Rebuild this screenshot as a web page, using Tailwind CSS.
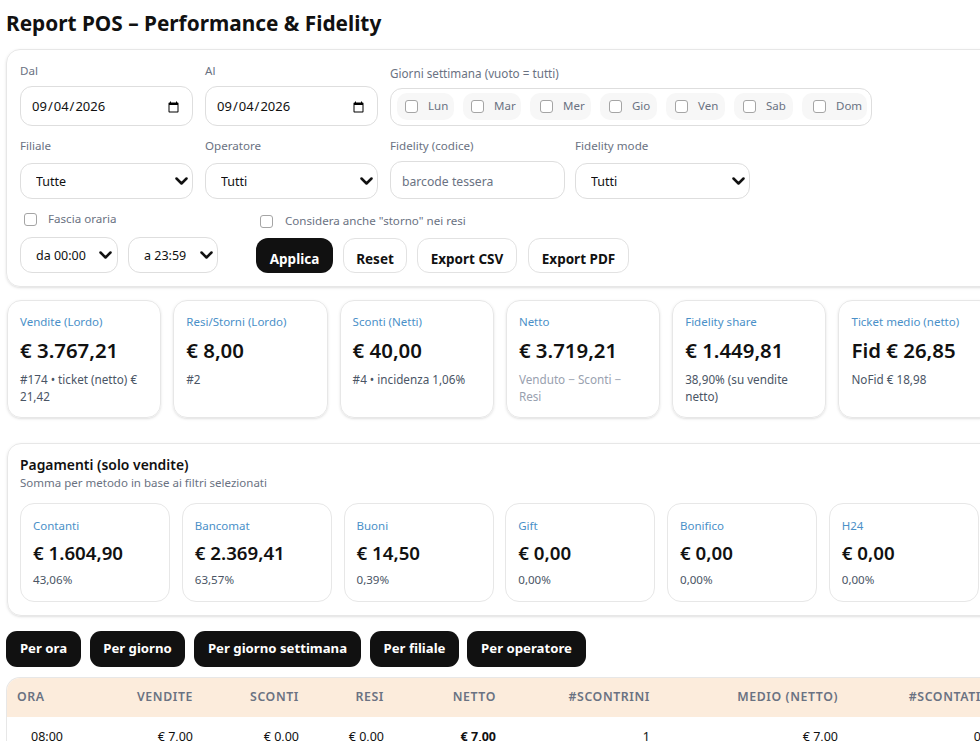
<!DOCTYPE html>
<html lang="it">
  <head>
    <meta charset="UTF-8" />
    <title>Report POS</title>
    <script src="https://cdn.jsdelivr.net/npm/@tailwindcss/browser@4"></script>
  </head>
  <body class="h-[741px] w-[980px] overflow-hidden bg-white font-['Noto_Sans',sans-serif] text-[#111]">
    <main class="w-[1040px] pl-[6px]">
      <h1 class="h-[49px] pt-[7px] text-[20.8px] leading-[32px] font-bold">Report POS – Performance &amp; Fidelity</h1>

      <!-- filtri -->
      <section class="h-[238px] w-[1020px] rounded-[14px] border border-[#e7e7e7] pl-[13px] pt-[13px] shadow-sm">
        <div class="flex items-end gap-3">
          <label class="block w-[173px]">
            <span class="block text-[11.6px] leading-[16px] text-gray-500">Dal</span>
            <input type="date" value="2026-09-04" class="mt-[7px] h-[40px] w-full rounded-[12px] border border-[#dedede] px-[10px] pt-[2px] text-[13px]" />
          </label>
          <label class="block w-[173px]">
            <span class="block text-[11.6px] leading-[16px] text-gray-500">Al</span>
            <input type="date" value="2026-09-04" class="mt-[7px] h-[40px] w-full rounded-[12px] border border-[#dedede] px-[10px] pt-[2px] text-[13px]" />
          </label>
          <div class="w-[482px]">
            <span class="block text-[11.7px] leading-[16px] text-gray-500">Giorni settimana (vuoto = tutti)</span>
            <div class="mt-[7px] flex h-[38px] items-center gap-[9px] rounded-[12px] border border-[#dedede] pl-[6px] pb-[2px] text-[11.5px] text-gray-500">
              <label class="flex h-[27px] w-[57px] items-center gap-[10px] rounded-[10px] bg-[#f7f7f7] pl-[8px]"><input type="checkbox" class="size-[13px] appearance-none rounded-[3px] border border-[#a5a5a5] bg-white" />Lun</label>
              <label class="flex h-[27px] w-[58px] items-center gap-[10px] rounded-[10px] bg-[#f7f7f7] pl-[8px]"><input type="checkbox" class="size-[13px] appearance-none rounded-[3px] border border-[#a5a5a5] bg-white" />Mar</label>
              <label class="flex h-[27px] w-[61px] items-center gap-[10px] rounded-[10px] bg-[#f7f7f7] pl-[10px]"><input type="checkbox" class="size-[13px] appearance-none rounded-[3px] border border-[#a5a5a5] bg-white" />Mer</label>
              <label class="flex h-[27px] w-[57px] items-center gap-[10px] rounded-[10px] bg-[#f7f7f7] pl-[9px]"><input type="checkbox" class="size-[13px] appearance-none rounded-[3px] border border-[#a5a5a5] bg-white" />Gio</label>
              <label class="flex h-[27px] w-[59px] items-center gap-[10px] rounded-[10px] bg-[#f7f7f7] pl-[9px]"><input type="checkbox" class="size-[13px] appearance-none rounded-[3px] border border-[#a5a5a5] bg-white" />Ven</label>
              <label class="flex h-[27px] w-[59px] items-center gap-[10px] rounded-[10px] bg-[#f7f7f7] pl-[9px]"><input type="checkbox" class="size-[13px] appearance-none rounded-[3px] border border-[#a5a5a5] bg-white" />Sab</label>
              <label class="flex h-[27px] w-[65px] items-center gap-[10px] rounded-[10px] bg-[#f7f7f7] pl-[11px]"><input type="checkbox" class="size-[13px] appearance-none rounded-[3px] border border-[#a5a5a5] bg-white" />Dom</label>
            </div>
          </div>
        </div>

        <div class="mt-[12px] flex items-end gap-3">
          <label class="block w-[173px]">
            <span class="block text-[11.6px] leading-[16px] text-gray-500">Filiale</span>
            <span class="relative mt-[9px] block h-[36px]">
              <select class="h-full w-full appearance-none rounded-[12px] border border-[#dedede] pl-[15px] pt-[3px] text-[12.5px]"><option>Tutte</option></select>
              <svg class="pointer-events-none absolute right-[5px] top-[14px]" width="13" height="8" viewBox="0 0 13 8" fill="none" stroke="#111" stroke-width="2.5" stroke-linecap="round" stroke-linejoin="round"><path d="M1.5 1.5l5 5 5-5" /></svg>
            </span>
          </label>
          <label class="block w-[173px]">
            <span class="block text-[11.6px] leading-[16px] text-gray-500">Operatore</span>
            <span class="relative mt-[9px] block h-[36px]">
              <select class="h-full w-full appearance-none rounded-[12px] border border-[#dedede] pl-[15px] pt-[3px] text-[12.5px]"><option>Tutti</option></select>
              <svg class="pointer-events-none absolute right-[5px] top-[14px]" width="13" height="8" viewBox="0 0 13 8" fill="none" stroke="#111" stroke-width="2.5" stroke-linecap="round" stroke-linejoin="round"><path d="M1.5 1.5l5 5 5-5" /></svg>
            </span>
          </label>
          <label class="block w-[175px]">
            <span class="block text-[11.6px] leading-[16px] text-gray-500">Fidelity (codice)</span>
            <input type="text" placeholder="barcode tessera" class="mt-[7px] h-[38px] w-full rounded-[12px] border border-[#dedede] px-[11px] pt-[2px] text-[12.2px] placeholder:text-gray-500" />
          </label>
          <label class="ml-[-2px] block w-[175px]">
            <span class="block text-[11.6px] leading-[16px] text-gray-500">Fidelity mode</span>
            <span class="relative mt-[9px] block h-[36px]">
              <select class="h-full w-full appearance-none rounded-[12px] border border-[#dedede] pl-[15px] pt-[3px] text-[12.5px]"><option>Tutti</option></select>
              <svg class="pointer-events-none absolute right-[5px] top-[14px]" width="13" height="8" viewBox="0 0 13 8" fill="none" stroke="#111" stroke-width="2.5" stroke-linecap="round" stroke-linejoin="round"><path d="M1.5 1.5l5 5 5-5" /></svg>
            </span>
          </label>
        </div>

        <div class="mt-[13px] flex items-end">
          <div class="w-[236px]">
            <label class="flex items-center gap-[11px] pl-[4px] text-[11.6px] leading-[14px] text-gray-500"><input type="checkbox" class="size-[13px] appearance-none rounded-[3px] border border-[#a5a5a5] bg-white" />Fascia oraria</label>
            <div class="mt-[11px] flex gap-[10px]">
              <span class="relative block h-[36px] w-[98px]">
                <select class="h-full w-full appearance-none rounded-[12px] border border-[#dedede] pl-[15px] pt-[3px] text-[12.5px]"><option>da 00:00</option></select>
                <svg class="pointer-events-none absolute right-[6px] top-[14px]" width="13" height="8" viewBox="0 0 13 8" fill="none" stroke="#111" stroke-width="2.5" stroke-linecap="round" stroke-linejoin="round"><path d="M1.5 1.5l5 5 5-5" /></svg>
              </span>
              <span class="relative block h-[36px] w-[90px]">
                <select class="h-full w-full appearance-none rounded-[12px] border border-[#dedede] pl-[15px] pt-[3px] text-[12.5px]"><option>a 23:59</option></select>
                <svg class="pointer-events-none absolute right-[5px] top-[14px]" width="13" height="8" viewBox="0 0 13 8" fill="none" stroke="#111" stroke-width="2.5" stroke-linecap="round" stroke-linejoin="round"><path d="M1.5 1.5l5 5 5-5" /></svg>
              </span>
            </div>
          </div>
          <div>
            <label class="flex items-center gap-[12px] pl-[4px] text-[11.6px] leading-[14px] text-gray-500"><input type="checkbox" class="size-[13px] appearance-none rounded-[3px] border border-[#a5a5a5] bg-white" />Considera anche "storno" nei resi</label>
            <div class="mt-[10px] flex gap-[10px] text-[13.5px] font-bold">
              <button class="h-[35px] w-[77px] rounded-[12px] bg-[#111] pt-[8px] text-white">Applica</button>
              <button class="h-[35px] w-[64px] rounded-[12px] border border-[#e2e2e2] pt-[8px]">Reset</button>
              <button class="h-[35px] w-[100px] rounded-[12px] border border-[#e2e2e2] pt-[8px]">Export CSV</button>
              <button class="ml-[1px] h-[35px] w-[101px] rounded-[12px] border border-[#e2e2e2] pt-[8px]">Export PDF</button>
            </div>
          </div>
        </div>
      </section>

      <!-- kpi -->
      <section class="mt-[13px] ml-[1px] flex gap-3">
        <div class="h-[118px] w-[154.3px] shrink-0 rounded-[14px] border border-[#e7e7e7] pl-[12px] pr-[8px] pt-[13px] shadow-sm">
          <p class="text-[11.5px] leading-[16px] text-[#4a90c8]">Vendite (Lordo)</p>
          <p class="mt-[6px] text-[20.4px] leading-[28px] font-semibold">€ 3.767,21</p>
          <p class="mt-[7px] text-[11.7px] leading-[17px] text-gray-600">#174 • ticket (netto) € 21,42</p>
        </div>
        <div class="h-[118px] w-[154.3px] shrink-0 rounded-[14px] border border-[#e7e7e7] pl-[12px] pr-[8px] pt-[13px] shadow-sm">
          <p class="text-[11.5px] leading-[16px] text-[#4a90c8]">Resi/Storni (Lordo)</p>
          <p class="mt-[6px] text-[20.4px] leading-[28px] font-semibold">€ 8,00</p>
          <p class="mt-[7px] text-[11.7px] leading-[17px] text-gray-600">#2</p>
        </div>
        <div class="h-[118px] w-[154.3px] shrink-0 rounded-[14px] border border-[#e7e7e7] pl-[12px] pr-[8px] pt-[13px] shadow-sm">
          <p class="text-[11.5px] leading-[16px] text-[#4a90c8]">Sconti (Netti)</p>
          <p class="mt-[6px] text-[20.4px] leading-[28px] font-semibold">€ 40,00</p>
          <p class="mt-[7px] text-[11.7px] leading-[17px] text-gray-600">#4 • incidenza 1,06%</p>
        </div>
        <div class="h-[118px] w-[154.3px] shrink-0 rounded-[14px] border border-[#e7e7e7] pl-[12px] pr-[20px] pt-[13px] shadow-sm">
          <p class="text-[11.5px] leading-[16px] text-[#4a90c8]">Netto</p>
          <p class="mt-[6px] text-[20.4px] leading-[28px] font-semibold">€ 3.719,21</p>
          <p class="mt-[7px] text-[11.7px] leading-[17px] text-gray-400">Venduto − Sconti − Resi</p>
        </div>
        <div class="h-[118px] w-[154.3px] shrink-0 rounded-[14px] border border-[#e7e7e7] pl-[12px] pr-[8px] pt-[13px] shadow-sm">
          <p class="text-[11.5px] leading-[16px] text-[#4a90c8]">Fidelity share</p>
          <p class="mt-[6px] text-[20.4px] leading-[28px] font-semibold">€ 1.449,81</p>
          <p class="mt-[7px] text-[11.7px] leading-[17px] text-gray-600">38,90% (su vendite netto)</p>
        </div>
        <div class="h-[118px] w-[154.3px] shrink-0 rounded-[14px] border border-[#e7e7e7] pl-[12px] pr-[8px] pt-[13px] shadow-sm">
          <p class="text-[11.5px] leading-[16px] text-[#4a90c8]">Ticket medio (netto)</p>
          <p class="mt-[6px] text-[20.4px] leading-[28px] font-semibold">Fid € 26,85</p>
          <p class="mt-[7px] text-[11.7px] leading-[17px] text-gray-600">NoFid € 18,98</p>
        </div>
      </section>

      <!-- pagamenti -->
      <section class="mt-[25px] ml-[1px] h-[173px] w-[1020px] rounded-[14px] border border-[#e7e7e7] pl-[12px] pt-[12px] shadow-sm">
        <h2 class="text-[13.9px] leading-[18px] font-semibold">Pagamenti (solo vendite)</h2>
        <p class="text-[11.5px] leading-[17px] text-gray-500">Somma per metodo in base ai filtri selezionati</p>
        <div class="mt-[12px] flex gap-[11.75px]">
          <div class="h-[99px] w-[150px] shrink-0 rounded-[14px] border border-[#e7e7e7] pl-[12px] pt-[14px]">
            <p class="text-[11.5px] leading-[16px] text-[#4a90c8]">Contanti</p>
            <p class="mt-[6px] text-[18.7px] leading-[26px] font-semibold">€ 1.604,90</p>
            <p class="mt-[6px] text-[11.6px] leading-[16px] text-gray-600">43,06%</p>
          </div>
          <div class="h-[99px] w-[150px] shrink-0 rounded-[14px] border border-[#e7e7e7] pl-[12px] pt-[14px]">
            <p class="text-[11.5px] leading-[16px] text-[#4a90c8]">Bancomat</p>
            <p class="mt-[6px] text-[18.7px] leading-[26px] font-semibold">€ 2.369,41</p>
            <p class="mt-[6px] text-[11.6px] leading-[16px] text-gray-600">63,57%</p>
          </div>
          <div class="h-[99px] w-[150px] shrink-0 rounded-[14px] border border-[#e7e7e7] pl-[12px] pt-[14px]">
            <p class="text-[11.5px] leading-[16px] text-[#4a90c8]">Buoni</p>
            <p class="mt-[6px] text-[18.7px] leading-[26px] font-semibold">€ 14,50</p>
            <p class="mt-[6px] text-[11.6px] leading-[16px] text-gray-600">0,39%</p>
          </div>
          <div class="h-[99px] w-[150px] shrink-0 rounded-[14px] border border-[#e7e7e7] pl-[12px] pt-[14px]">
            <p class="text-[11.5px] leading-[16px] text-[#4a90c8]">Gift</p>
            <p class="mt-[6px] text-[18.7px] leading-[26px] font-semibold">€ 0,00</p>
            <p class="mt-[6px] text-[11.6px] leading-[16px] text-gray-600">0,00%</p>
          </div>
          <div class="h-[99px] w-[150px] shrink-0 rounded-[14px] border border-[#e7e7e7] pl-[12px] pt-[14px]">
            <p class="text-[11.5px] leading-[16px] text-[#4a90c8]">Bonifico</p>
            <p class="mt-[6px] text-[18.7px] leading-[26px] font-semibold">€ 0,00</p>
            <p class="mt-[6px] text-[11.6px] leading-[16px] text-gray-600">0,00%</p>
          </div>
          <div class="h-[99px] w-[150px] shrink-0 rounded-[14px] border border-[#e7e7e7] pl-[12px] pt-[14px]">
            <p class="text-[11.5px] leading-[16px] text-[#4a90c8]">H24</p>
            <p class="mt-[6px] text-[18.7px] leading-[26px] font-semibold">€ 0,00</p>
            <p class="mt-[6px] text-[11.6px] leading-[16px] text-gray-600">0,00%</p>
          </div>
        </div>
      </section>

      <!-- tab -->
      <nav class="mt-[15px] flex gap-[9px] text-[13.2px] font-bold text-white">
        <button class="h-[36px] w-[75px] rounded-[11px] bg-[#111]">Per ora</button>
        <button class="h-[36px] w-[95px] rounded-[11px] bg-[#111]">Per giorno</button>
        <button class="h-[36px] w-[167px] rounded-[11px] bg-[#111]">Per giorno settimana</button>
        <button class="h-[36px] w-[89px] rounded-[11px] bg-[#111]">Per filiale</button>
        <button class="ml-[-1px] h-[36px] w-[119px] rounded-[11px] bg-[#111]">Per operatore</button>
      </nav>

      <!-- tabella -->
      <div class="mt-[10px] w-[1020px] overflow-hidden rounded-t-[14px] border-x border-t border-[#e7e7e7]">
        <table class="w-full table-fixed border-collapse text-right">
          <thead class="bg-[#fcecdc] text-[12.3px] tracking-[0.6px] text-gray-500">
            <tr class="h-[39px]">
              <th class="w-[110px] pl-[10px] text-left font-semibold">ORA</th>
              <th class="w-[76px] font-semibold">VENDITE</th>
              <th class="w-[106px] font-semibold">SCONTI</th>
              <th class="w-[85px] font-semibold">RESI</th>
              <th class="w-[112px] font-semibold">NETTO</th>
              <th class="w-[154px] font-semibold">#SCONTRINI</th>
              <th class="w-[188px] font-semibold">MEDIO (NETTO)</th>
              <th class="w-[143px] font-semibold">#SCONTATI</th>
              <th></th>
            </tr>
          </thead>
          <tbody class="text-[12.5px]">
            <tr class="h-[41px]">
              <td class="pl-[24px] text-left">08:00</td>
              <td>€ 7,00</td>
              <td>€ 0,00</td>
              <td>€ 0,00</td>
              <td class="font-bold">€ 7,00</td>
              <td>1</td>
              <td>€ 7,00</td>
              <td>0</td>
              <td></td>
            </tr>
          </tbody>
        </table>
      </div>
    </main>
  </body>
</html>
